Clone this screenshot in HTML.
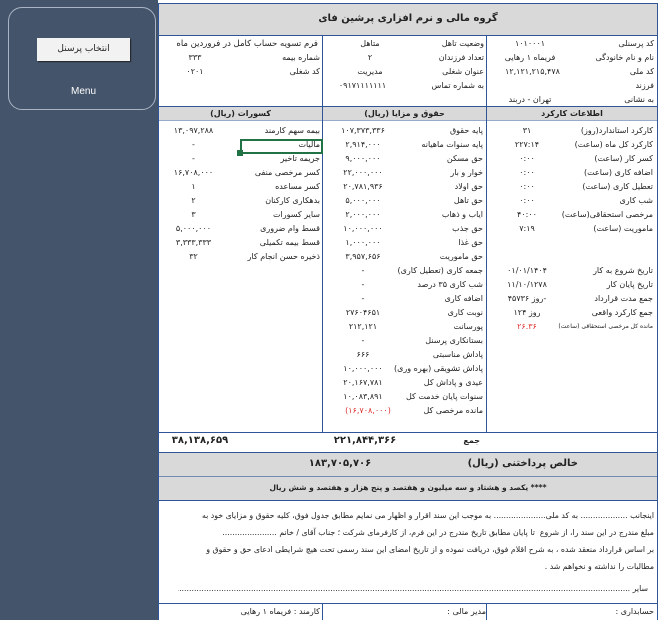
<!DOCTYPE html>
<html><head><meta charset="utf-8"><style>
*{margin:0;padding:0;box-sizing:border-box}
body{width:660px;height:620px;position:relative;overflow:hidden;background:#fff;font-family:"DejaVu Sans","Liberation Sans",sans-serif;font-size:8px;color:#222}
.a{position:absolute;white-space:nowrap;line-height:12px}
.r{direction:rtl;text-align:right}
.c{text-align:center}
.l{position:absolute;background:#2f5597}
.g{position:absolute;background:#d9d9d9}
.red{color:#e03030}
.b{font-weight:bold}
.p{position:absolute;left:162px;width:492px;overflow:hidden;direction:rtl;text-align:right;white-space:nowrap;line-height:12px;font-size:7.8px}
</style></head><body>
<div style="position:absolute;left:0;top:0;width:158px;height:620px;background:#44546a"></div>
<div style="position:absolute;left:8px;top:7px;width:148px;height:103px;border:1px solid #aab4c4;border-radius:14px"></div>
<div class="a c" style="left:37px;top:38px;width:93px;height:23px;line-height:23px;background:#f2f2f2;box-shadow:1px 1px 1px #222;font-size:9px">انتخاب پرسنل</div>
<div class="a c" style="left:37px;top:86px;width:93px;color:#fff;font-family:'Liberation Sans',sans-serif;font-size:10px">Menu</div>

<div class="g" style="left:159px;top:4px;width:498px;height:31px"></div>
<div class="g" style="left:159px;top:107px;width:498px;height:13px"></div>
<div class="g" style="left:159px;top:452px;width:498px;height:48px"></div>
<div class="l" style="left:158px;top:3px;width:500px;height:1px"></div>
<div class="l" style="left:158px;top:3px;width:1px;height:617px"></div>
<div class="l" style="left:657px;top:3px;width:1px;height:617px"></div>
<div class="l" style="left:158px;top:35px;width:500px;height:1px"></div>
<div class="l" style="left:158px;top:106px;width:500px;height:1px"></div>
<div class="l" style="left:158px;top:120px;width:500px;height:1px;opacity:.5"></div>
<div class="l" style="left:158px;top:432px;width:500px;height:1px"></div>
<div class="l" style="left:158px;top:452px;width:500px;height:1px"></div>
<div class="l" style="left:158px;top:476px;width:500px;height:1px;opacity:.6"></div>
<div class="l" style="left:158px;top:500px;width:500px;height:1px"></div>
<div class="l" style="left:158px;top:603px;width:500px;height:1px"></div>
<div class="l" style="left:322px;top:35px;width:1px;height:397px"></div>
<div class="l" style="left:486px;top:35px;width:1px;height:397px"></div>
<div class="l" style="left:322px;top:603px;width:1px;height:17px"></div>
<div class="l" style="left:486px;top:603px;width:1px;height:17px"></div>

<div class="a c b" style="left:159px;top:13px;width:498px;font-size:10px">گروه مالی و نرم افزاری پرشین فای</div>

<div class="a r" style="right:6px;top:38px">کد پرسنلی</div>
<div class="a r" style="right:6px;top:52px">نام و نام خانودگی</div>
<div class="a r" style="right:6px;top:66px">کد ملی</div>
<div class="a r" style="right:6px;top:80px">فرزند</div>
<div class="a r" style="right:6px;top:94px">به نشانی</div>
<div class="a c" style="left:500px;top:38px;width:60px">۱۰۱۰۰۰۱</div>
<div class="a c" style="left:500px;top:52px;width:60px">فریماه ۱ رهایی</div>
<div class="a c" style="left:495px;top:66px;width:75px">۱۲,۱۲۱,۲۱۵,۴۷۸</div>
<div class="a c" style="left:500px;top:94px;width:60px">تهران - دربند</div>

<div class="a r" style="right:176px;top:38px">وضعیت تاهل</div>
<div class="a r" style="right:176px;top:52px">تعداد فرزندان</div>
<div class="a r" style="right:176px;top:66px">عنوان شغلی</div>
<div class="a r" style="right:176px;top:80px">به شماره تماس</div>
<div class="a c" style="left:340px;top:38px;width:60px">متاهل</div>
<div class="a c" style="left:340px;top:52px;width:60px">۲</div>
<div class="a c" style="left:340px;top:66px;width:60px">مدیریت</div>
<div class="a c" style="left:325px;top:80px;width:75px">۰۹۱۷۱۱۱۱۱۱۱</div>

<div class="a r" style="right:342px;top:38px;font-size:8.5px">فرم تسویه حساب کامل در فروردین ماه</div>
<div class="a r" style="right:340px;top:52px">شماره بیمه</div>
<div class="a r" style="right:340px;top:66px">کد شغلی</div>
<div class="a c" style="left:175px;top:52px;width:40px">۳۳۳</div>
<div class="a c" style="left:175px;top:66px;width:40px">۰۲۰۱</div>

<div class="a c b" style="left:487px;top:108px;width:170px">اطلاعات کارکرد</div>
<div class="a c b" style="left:323px;top:108px;width:163px">حقوق و مزایا (ریال)</div>
<div class="a c b" style="left:159px;top:108px;width:163px">کسورات (ریال)</div>

<div style="position:absolute;left:487px;top:125px;width:168px">
<div class="a r" style="right:2px;top:0">کارکرد استاندارد(روز)</div><div class="a c" style="left:25px;top:0;width:30px">۳۱</div>
<div class="a r" style="right:2px;top:14px">کارکرد کل ماه (ساعت)</div><div class="a c" style="left:20px;top:14px;width:40px">۲۲۷:۱۴</div>
<div class="a r" style="right:2px;top:28px">کسر کار (ساعت)</div><div class="a c" style="left:20px;top:28px;width:40px">۰:۰۰</div>
<div class="a r" style="right:2px;top:42px">اضافه کاری (ساعت)</div><div class="a c" style="left:20px;top:42px;width:40px">۰:۰۰</div>
<div class="a r" style="right:2px;top:56px">تعطیل کاری (ساعت)</div><div class="a c" style="left:20px;top:56px;width:40px">۰:۰۰</div>
<div class="a r" style="right:2px;top:70px">شب کاری</div><div class="a c" style="left:20px;top:70px;width:40px">۰:۰۰</div>
<div class="a r" style="right:2px;top:84px">مرخصی استحقاقی(ساعت)</div><div class="a c" style="left:20px;top:84px;width:40px">۴۰:۰۰</div>
<div class="a r" style="right:2px;top:98px">ماموریت (ساعت)</div><div class="a c" style="left:20px;top:98px;width:40px">۷:۱۹</div>
<div class="a r" style="right:2px;top:140px">تاریخ شروع به کار</div><div class="a c" style="left:10px;top:140px;width:60px">۰۱/۰۱/۱۴۰۴</div>
<div class="a r" style="right:2px;top:154px">تاریخ پایان کار</div><div class="a c" style="left:10px;top:154px;width:60px">۱۱/۱۰/۱۲۷۸</div>
<div class="a r" style="right:2px;top:168px">جمع مدت قرارداد</div><div class="a c" style="left:10px;top:168px;width:60px">روز ۴۵۷۳۶-</div>
<div class="a r" style="right:2px;top:182px">جمع کارکرد واقعی</div><div class="a c" style="left:10px;top:182px;width:60px">روز ۱۲۴</div>
<div class="a r" style="right:2px;top:196px;font-size:6px">مانده کل مرخصی استحقاقی (ساعت)</div><div class="a c red" style="left:20px;top:196px;width:40px">۲۶.۳۶</div>
</div>

<div style="position:absolute;left:323px;top:125px;width:162px">
<div class="a r" style="right:2px;top:0">پایه حقوق</div><div class="a c" style="left:5px;top:0;width:70px">۱۰۷,۳۷۳,۳۳۶</div>
<div class="a r" style="right:2px;top:14px">پایه سنوات ماهیانه</div><div class="a c" style="left:5px;top:14px;width:70px">۲,۹۱۴,۰۰۰</div>
<div class="a r" style="right:2px;top:28px">حق مسکن</div><div class="a c" style="left:5px;top:28px;width:70px">۹,۰۰۰,۰۰۰</div>
<div class="a r" style="right:2px;top:42px">خوار و بار</div><div class="a c" style="left:5px;top:42px;width:70px">۲۲,۰۰۰,۰۰۰</div>
<div class="a r" style="right:2px;top:56px">حق اولاد</div><div class="a c" style="left:5px;top:56px;width:70px">۲۰,۷۸۱,۹۳۶</div>
<div class="a r" style="right:2px;top:70px">حق تاهل</div><div class="a c" style="left:5px;top:70px;width:70px">۵,۰۰۰,۰۰۰</div>
<div class="a r" style="right:2px;top:84px">ایاب و ذهاب</div><div class="a c" style="left:5px;top:84px;width:70px">۲,۰۰۰,۰۰۰</div>
<div class="a r" style="right:2px;top:98px">حق جذب</div><div class="a c" style="left:5px;top:98px;width:70px">۱۰,۰۰۰,۰۰۰</div>
<div class="a r" style="right:2px;top:112px">حق غذا</div><div class="a c" style="left:5px;top:112px;width:70px">۱,۰۰۰,۰۰۰</div>
<div class="a r" style="right:2px;top:126px">حق ماموریت</div><div class="a c" style="left:5px;top:126px;width:70px">۳,۹۵۷,۶۵۶</div>
<div class="a r" style="right:2px;top:140px">جمعه کاری (تعطیل کاری)</div><div class="a c" style="left:5px;top:140px;width:70px">-</div>
<div class="a r" style="right:2px;top:154px">شب کاری ۳۵ درصد</div><div class="a c" style="left:5px;top:154px;width:70px">-</div>
<div class="a r" style="right:2px;top:168px">اضافه کاری</div><div class="a c" style="left:5px;top:168px;width:70px">-</div>
<div class="a r" style="right:2px;top:182px">نوبت کاری</div><div class="a c" style="left:5px;top:182px;width:70px">۲۷۶۰۴۶۵۱</div>
<div class="a r" style="right:2px;top:196px">پورسانت</div><div class="a c" style="left:5px;top:196px;width:70px">۲۱۲,۱۲۱</div>
<div class="a r" style="right:2px;top:210px">بستانکاری پرسنل</div><div class="a c" style="left:5px;top:210px;width:70px">-</div>
<div class="a r" style="right:2px;top:224px">پاداش مناسبتی</div><div class="a c" style="left:5px;top:224px;width:70px">۶۶۶</div>
<div class="a r" style="right:2px;top:238px">پاداش تشویقی (بهره وری)</div><div class="a c" style="left:5px;top:238px;width:70px">۱۰,۰۰۰,۰۰۰</div>
<div class="a r" style="right:2px;top:252px">عیدی و پاداش کل</div><div class="a c" style="left:5px;top:252px;width:70px">۲۰,۱۶۷,۷۸۱</div>
<div class="a r" style="right:2px;top:266px">سنوات پایان خدمت کل</div><div class="a c" style="left:5px;top:266px;width:70px">۱۰,۰۸۳,۸۹۱</div>
<div class="a r" style="right:2px;top:280px">مانده مرخصی کل</div><div class="a c red" style="left:5px;top:280px;width:80px">(۱۶,۷۰۸,۰۰۰)</div>
</div>

<div style="position:absolute;left:159px;top:125px;width:163px">
<div class="a r" style="right:2px;top:0">بیمه سهم کارمند</div><div class="a c" style="left:2px;top:0;width:65px">۱۳,۰۹۷,۲۸۸</div>
<div class="a r" style="right:2px;top:14px">مالیات</div><div class="a c" style="left:2px;top:14px;width:65px">-</div>
<div class="a r" style="right:2px;top:28px">جریمه تاخیر</div><div class="a c" style="left:2px;top:28px;width:65px">-</div>
<div class="a r" style="right:2px;top:42px">کسر مرخصی منفی</div><div class="a c" style="left:2px;top:42px;width:65px">۱۶,۷۰۸,۰۰۰</div>
<div class="a r" style="right:2px;top:56px">کسر مساعده</div><div class="a c" style="left:2px;top:56px;width:65px">۱</div>
<div class="a r" style="right:2px;top:70px">بدهکاری کارکنان</div><div class="a c" style="left:2px;top:70px;width:65px">۲</div>
<div class="a r" style="right:2px;top:84px">سایر کسورات</div><div class="a c" style="left:2px;top:84px;width:65px">۳</div>
<div class="a r" style="right:2px;top:98px">قسط وام ضروری</div><div class="a c" style="left:2px;top:98px;width:65px">۵,۰۰۰,۰۰۰</div>
<div class="a r" style="right:2px;top:112px">قسط بیمه تکمیلی</div><div class="a c" style="left:2px;top:112px;width:65px">۳,۳۳۳,۳۳۳</div>
<div class="a r" style="right:2px;top:126px">ذخیره حسن انجام کار</div><div class="a c" style="left:2px;top:126px;width:65px">۳۲</div>
</div>
<div style="position:absolute;left:240px;top:139px;width:83px;height:15px;border:2px solid #217346"></div>
<div style="position:absolute;left:237px;top:150px;width:6px;height:6px;background:#217346"></div>

<div class="a c b" style="left:170px;top:435px;width:60px;font-size:10px">۳۸,۱۳۸,۶۵۹</div>
<div class="a c b" style="left:330px;top:435px;width:70px;font-size:10px">۲۲۱,۸۴۴,۳۶۶</div>
<div class="a r b" style="right:180px;top:435px">جمع</div>
<div class="a r b" style="right:82px;top:458px;font-size:10px">خالص پرداختنی (ریال)</div>
<div class="a c b" style="left:300px;top:458px;width:80px;font-size:10px">۱۸۳,۷۰۵,۷۰۶</div>
<div class="a c b" style="left:159px;top:482px;width:498px;font-size:7.5px">یکصد و هشتاد و سه میلیون و هفتصد و پنج هزار و هفتصد و شش ریال ****</div>

<div class="p" style="top:510px">اینجانب ................... به کد ملی..................... به موجب این سند اقرار و اظهار می نمایم مطابق جدول فوق، کلیه حقوق و مزایای خود به</div>
<div class="p" style="top:527px">مبلغ مندرج در این سند را، از شروع &nbsp;تا پایان مطابق تاریخ مندرج در این فرم، از کارفرمای شرکت ؛ جناب آقای / خانم ......................</div>
<div class="p" style="top:544px">بر اساس قرارداد منعقد شده ، به شرح اقلام فوق، دریافت نموده و از تاریخ امضای این سند رسمی تحت هیچ شرایطی ادعای حق و حقوق و</div>
<div class="p" style="top:561px">مطالبات را نداشته و نخواهم شد .</div>
<div class="p" style="top:583px;right:7px;left:178px;width:470px">سایر ..................................................................................................................................................................................................................</div>

<div class="a r" style="right:6px;top:606px">حسابداری :</div>
<div class="a r" style="right:174px;top:606px">مدیر مالی :</div>
<div class="a r" style="right:340px;top:606px">کارمند : فریماه ۱ رهایی</div>
</body></html>
